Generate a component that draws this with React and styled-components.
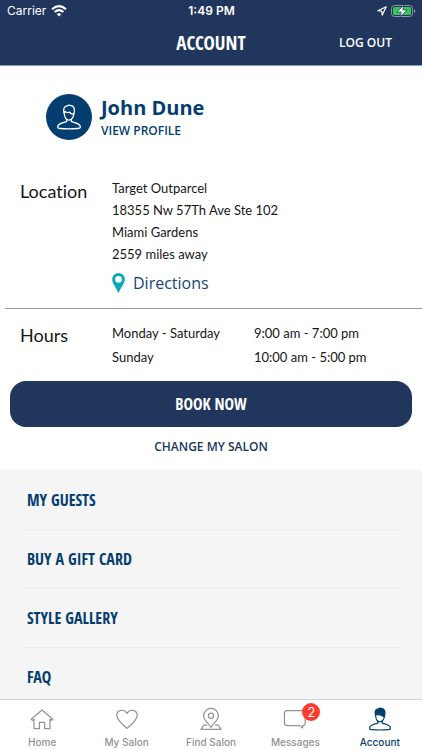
import styled, { createGlobalStyle } from "styled-components";

const navy = "#21365c";
const blue = "#043e70";
const condensed = `"Open Sans Condensed", "Roboto Condensed", "Liberation Sans Narrow", "Liberation Sans", sans-serif`;

const hours = [
    { day: "Monday - Saturday", time: "9:00 am - 7:00 pm" },
    { day: "Sunday", time: "10:00 am - 5:00 pm" },
];

const links = ["MY GUESTS", "BUY A GIFT CARD", "STYLE GALLERY", "FAQ"];

const PersonIcon = ({ size, filled }) => (
    <svg width={size} height={size} viewBox="0 0 24 24" fill="none" stroke="currentColor" strokeWidth="1.2" strokeLinejoin="round" aria-hidden="true">
        <path d="M7.6 8C7.8 12 9.6 14.8 12 14.8C14.4 14.8 16.4 12 16.5 8.4" />
        <path d="M7.5 8.6C6 3.6 8.4 2 10.6 1.8C11.6.6 12.8 1.2 13.4 1.4C16.8 1.6 17.6 4.6 16.6 8.8L15.4 9.4C14.4 9.2 13.4 8.6 12.6 7.6C10.8 8.2 9.4 7.8 8.4 6.8Z" fill={filled ? "currentColor" : "none"} />
        <path d="M9.8 13.8V16.2C6.4 17.2 1.6 17.8 1.5 21.2C1.5 22.2 2.4 22.5 3.6 22.6C9 23.1 15 23.1 20.4 22.6C21.6 22.5 22.5 22.2 22.5 21.2C22.4 17.8 17.6 17.2 14.2 16.2V13.8" />
    </svg>
);

const HomeIcon = () => (
    <svg width="24" height="24" viewBox="0 0 24 24" fill="none" stroke="currentColor" strokeWidth="1.2" strokeLinejoin="round" aria-hidden="true">
        <path d="M12 3L22.8 12.3L21.6 13.3L20 12.2V21.6H14.6V15.4H9.4V21.6H4V12.2L2.4 13.3L1.2 12.3Z" />
    </svg>
);

const HeartIcon = () => (
    <svg width="24" height="24" viewBox="0 0 24 24" fill="none" stroke="currentColor" strokeWidth="1.2" strokeLinejoin="round" aria-hidden="true">
        <path d="M12 21.4C8 17.8 1.8 13.3 1.8 8.3C1.8 2.8 9.4 1.2 12 6.6C14.6 1.2 22.2 2.8 22.2 8.3C22.2 13.3 16 17.8 12 21.4Z" />
    </svg>
);

const FindIcon = () => (
    <svg width="24" height="24" viewBox="0 0 24 24" fill="none" stroke="currentColor" strokeWidth="1.2" strokeLinejoin="round" aria-hidden="true">
        <path d="M12 20.5C9.6 16.5 4.6 13.2 4.6 8.8A7.4 7.4 0 0 1 19.4 8.8C19.4 13.2 14.4 16.5 12 20.5Z" />
        <circle cx="12" cy="8.8" r="2.6" />
        <path d="M8 18.2H4.6L2 22.4H22L19.4 18.2H16" />
    </svg>
);

const MessageIcon = () => (
    <svg width="24" height="24" viewBox="0 0 24 24" fill="none" stroke="currentColor" strokeWidth="1.2" strokeLinejoin="round" aria-hidden="true">
        <path d="M4.2 3.6H19.4Q22.2 3.6 22.2 6.4V15.8Q22.2 18.6 19.6 18.6V21L16.6 18.6H4.2Q1.4 18.6 1.4 15.8V6.4Q1.4 3.6 4.2 3.6Z" />
    </svg>
);

const tabs = [
    { label: "Home", icon: <HomeIcon /> },
    { label: "My Salon", icon: <HeartIcon /> },
    { label: "Find Salon", icon: <FindIcon /> },
    { label: "Messages", icon: <MessageIcon />, count: 2 },
    { label: "Account", icon: <PersonIcon size={24} filled />, active: true },
];

const App = () => {
    return (<>
        <GlobalStyle />
        <Screen>
            <Header>
                <StatusBar>
                    <Carrier>
                        Carrier
                        <svg width="16" height="12" viewBox="0 0 16 12" fill="none" stroke="#fff" strokeWidth="2.1" aria-hidden="true">
                            <path d="M1 4.2Q8-2 15 4.2M3.6 7Q8 3.2 12.4 7" />
                            <path d="M8 11.6L5.6 9.1Q8 7.2 10.4 9.1Z" fill="#fff" stroke="none" />
                        </svg>
                    </Carrier>
                    <Clock>1:49 PM</Clock>
                    <Power>
                        <svg width="10" height="10" viewBox="0 0 10 10" fill="none" stroke="#fff" strokeWidth="1.2" strokeLinejoin="round" aria-hidden="true">
                            <path d="M9.2.8L.9 4.7L4.7 5.2L5.3 9.1Z" />
                        </svg>
                        <svg width="25" height="12" viewBox="0 0 25 12" aria-hidden="true">
                            <rect x=".5" y=".5" width="21" height="11" rx="3" fill="none" stroke="#8c98aa" />
                            <rect x="2" y="2" width="18" height="8" rx="1.6" fill="#35c759" />
                            <path d="M23 4.2Q24.4 4.6 24.4 6T23 7.8Z" fill="#8c98aa" />
                            <path d="M12.8.4L5.8 7H10.2L9.2 11.6L16.2 5H11.8Z" fill="#fff" stroke={navy} strokeWidth=".7" />
                        </svg>
                    </Power>
                </StatusBar>
                <TitleBar>
                    <Title>ACCOUNT</Title>
                    <LogOut type="button">LOG OUT</LogOut>
                </TitleBar>
            </Header>
            <Main>
                <Profile>
                    <Avatar><PersonIcon size={26} /></Avatar>
                    <div>
                        <Name>John Dune</Name>
                        <ProfileLink href="#profile">VIEW PROFILE</ProfileLink>
                    </div>
                </Profile>
                <Section>
                    <SectionTitle>Location</SectionTitle>
                    <div>
                        <Address>
                            Target Outparcel<br />
                            18355 Nw 57Th Ave Ste 102<br />
                            Miami Gardens<br />
                            2559 miles away
                        </Address>
                        <Directions href="#directions">
                            <svg width="13" height="20" viewBox="0 0 13 20" aria-hidden="true">
                                <path fillRule="evenodd" fill="#08a9b8" d="M6.5 0A6.3 6.3 0 0 1 12.8 6.3C12.8 10.4 9 14.5 6.5 20C4 14.5.2 10.4.2 6.3A6.3 6.3 0 0 1 6.5 0ZM6.5 3.1A3.3 3.3 0 1 0 6.5 9.7A3.3 3.3 0 1 0 6.5 3.1Z" />
                            </svg>
                            Directions
                        </Directions>
                    </div>
                </Section>
                <Divider />
                <Section>
                    <SectionTitle>Hours</SectionTitle>
                    <HoursTable>
                        <tbody>
                            {hours.map(({ day, time }) => (
                                <tr key={day}>
                                    <th scope="row">{day}</th>
                                    <td>{time}</td>
                                </tr>
                            ))}
                        </tbody>
                    </HoursTable>
                </Section>
                <Actions>
                    <BookButton type="button">BOOK NOW</BookButton>
                    <ChangeButton type="button">CHANGE MY SALON</ChangeButton>
                </Actions>
                <LinkList>
                    {links.map((link) => (
                        <li key={link}><a href="#more">{link}</a></li>
                    ))}
                </LinkList>
            </Main>
            <TabBar>
                {tabs.map(({ label, icon, count, active }) => (
                    <Tab key={label} href="#tab" $active={active} aria-current={active ? "page" : undefined}>
                        <TabIcon>
                            {icon}
                            {count && <Badge>{count}</Badge>}
                        </TabIcon>
                        {label}
                    </Tab>
                ))}
            </TabBar>
        </Screen>
    </>)
};

const GlobalStyle = createGlobalStyle`
*{
    box-sizing:border-box;
}
body{
    margin:0;
    background-color:#fff;
    font-family:"Open Sans", sans-serif;
}
a{
    text-decoration:none;
}
button{
    border:none;
    padding:0;
    background:none;
    font-family:inherit;
    cursor:pointer;
}
svg{
    display:block;
    flex-shrink:0;
}
`
const Screen = styled.div`
display:flex;
flex-direction:column;
height:100vh;
`
const Header = styled.header`
flex-shrink:0;
background-color:${navy};
color:#fff;
border-bottom:1px solid #8f9bb0;
`
const StatusBar = styled.div`
display:grid;
grid-template-columns:1fr auto 1fr;
align-items:center;
height:21px;
padding:0 6px 0 7px;
font-family:Inter, sans-serif;
font-size:12px;
`
const Carrier = styled.div`
display:flex;
align-items:center;
gap:5px;
`
const Clock = styled.div`
font-weight:600;
`
const Power = styled.div`
display:flex;
justify-content:flex-end;
align-items:center;
gap:4px;
`
const TitleBar = styled.div`
display:grid;
grid-template-columns:1fr auto 1fr;
align-items:center;
height:44px;
padding:0 30px;
`
const Title = styled.h1`
grid-column:2;
margin:0;
font-family:${condensed};
font-size:19px;
line-height:44px;
font-weight:700;
`
const LogOut = styled.button`
justify-self:end;
color:#fff;
font-size:12px;
line-height:44px;
font-weight:600;
`
const Main = styled.main`
flex:1;
min-height:0;
overflow-y:auto;
scrollbar-width:none;
`
const Profile = styled.section`
display:flex;
align-items:center;
gap:9px;
padding:28px 46px 37px;
color:${blue};
`
const Avatar = styled.div`
display:flex;
justify-content:center;
align-items:center;
width:46px;
height:46px;
border-radius:50%;
background-color:${blue};
color:#fff;
`
const Name = styled.h2`
margin:0;
font-size:20px;
line-height:28px;
font-weight:700;
`
const ProfileLink = styled.a`
display:block;
color:inherit;
font-size:12px;
line-height:18px;
font-weight:600;
`
const Section = styled.section`
display:grid;
grid-template-columns:92px 1fr;
padding:0 20px;
font-family:Lato, sans-serif;
font-variant-ligatures:none;
color:#161616;
`
const SectionTitle = styled.h3`
margin:0;
font-size:18px;
line-height:28px;
font-weight:400;
`
const Address = styled.address`
font-size:13px;
line-height:22px;
font-style:normal;
`
const Directions = styled.a`
display:flex;
align-items:center;
gap:8px;
margin-top:7px;
font-family:"Open Sans", sans-serif;
font-size:16px;
line-height:22px;
color:#174478;
`
const Divider = styled.hr`
margin:14px 0 12px 5px;
border:none;
border-top:1px solid #999;
`
const HoursTable = styled.table`
border-collapse:collapse;
font-size:13px;
line-height:24px;
th{
    width:142px;
    padding:0;
    font-weight:400;
    text-align:left;
}
td{
    padding:0;
}
`
const Actions = styled.div`
display:flex;
flex-direction:column;
padding:12px 10px;
`
const BookButton = styled.button`
height:46px;
border-radius:16px;
background-color:${navy};
color:#fff;
font-family:${condensed};
font-size:16px;
font-weight:700;
`
const ChangeButton = styled.button`
align-self:center;
margin-top:9px;
color:${navy};
font-size:12px;
line-height:22px;
font-weight:600;
`
const LinkList = styled.ul`
margin:0;
padding:1px 22px 0;
list-style-type:none;
background-color:#f5f5f5;
li{
    border-bottom:1px solid #ececec;
}
li:last-child{
    border-bottom:none;
}
a{
    display:block;
    padding:0 5px;
    color:${blue};
    font-family:${condensed};
    font-size:16px;
    line-height:58px;
    font-weight:700;
}
`
const TabBar = styled.nav`
flex-shrink:0;
display:grid;
grid-template-columns:repeat(5, 1fr);
height:51px;
border-top:1px solid #d4d4d4;
background-color:#fff;
`
const Tab = styled.a`
display:flex;
flex-direction:column;
align-items:center;
gap:4px;
padding-top:7px;
font-family:Inter, sans-serif;
font-size:10px;
line-height:14px;
font-weight:500;
color:${({ $active }) => $active ? blue : "#929292"};
`
const TabIcon = styled.div`
position:relative;
`
const Badge = styled.span`
position:absolute;
top:-4px;
right:-13px;
width:18px;
height:18px;
border-radius:50%;
background-color:#fb3b30;
color:#fff;
font-size:13px;
line-height:18px;
font-weight:400;
text-align:center;
`
export default App;
